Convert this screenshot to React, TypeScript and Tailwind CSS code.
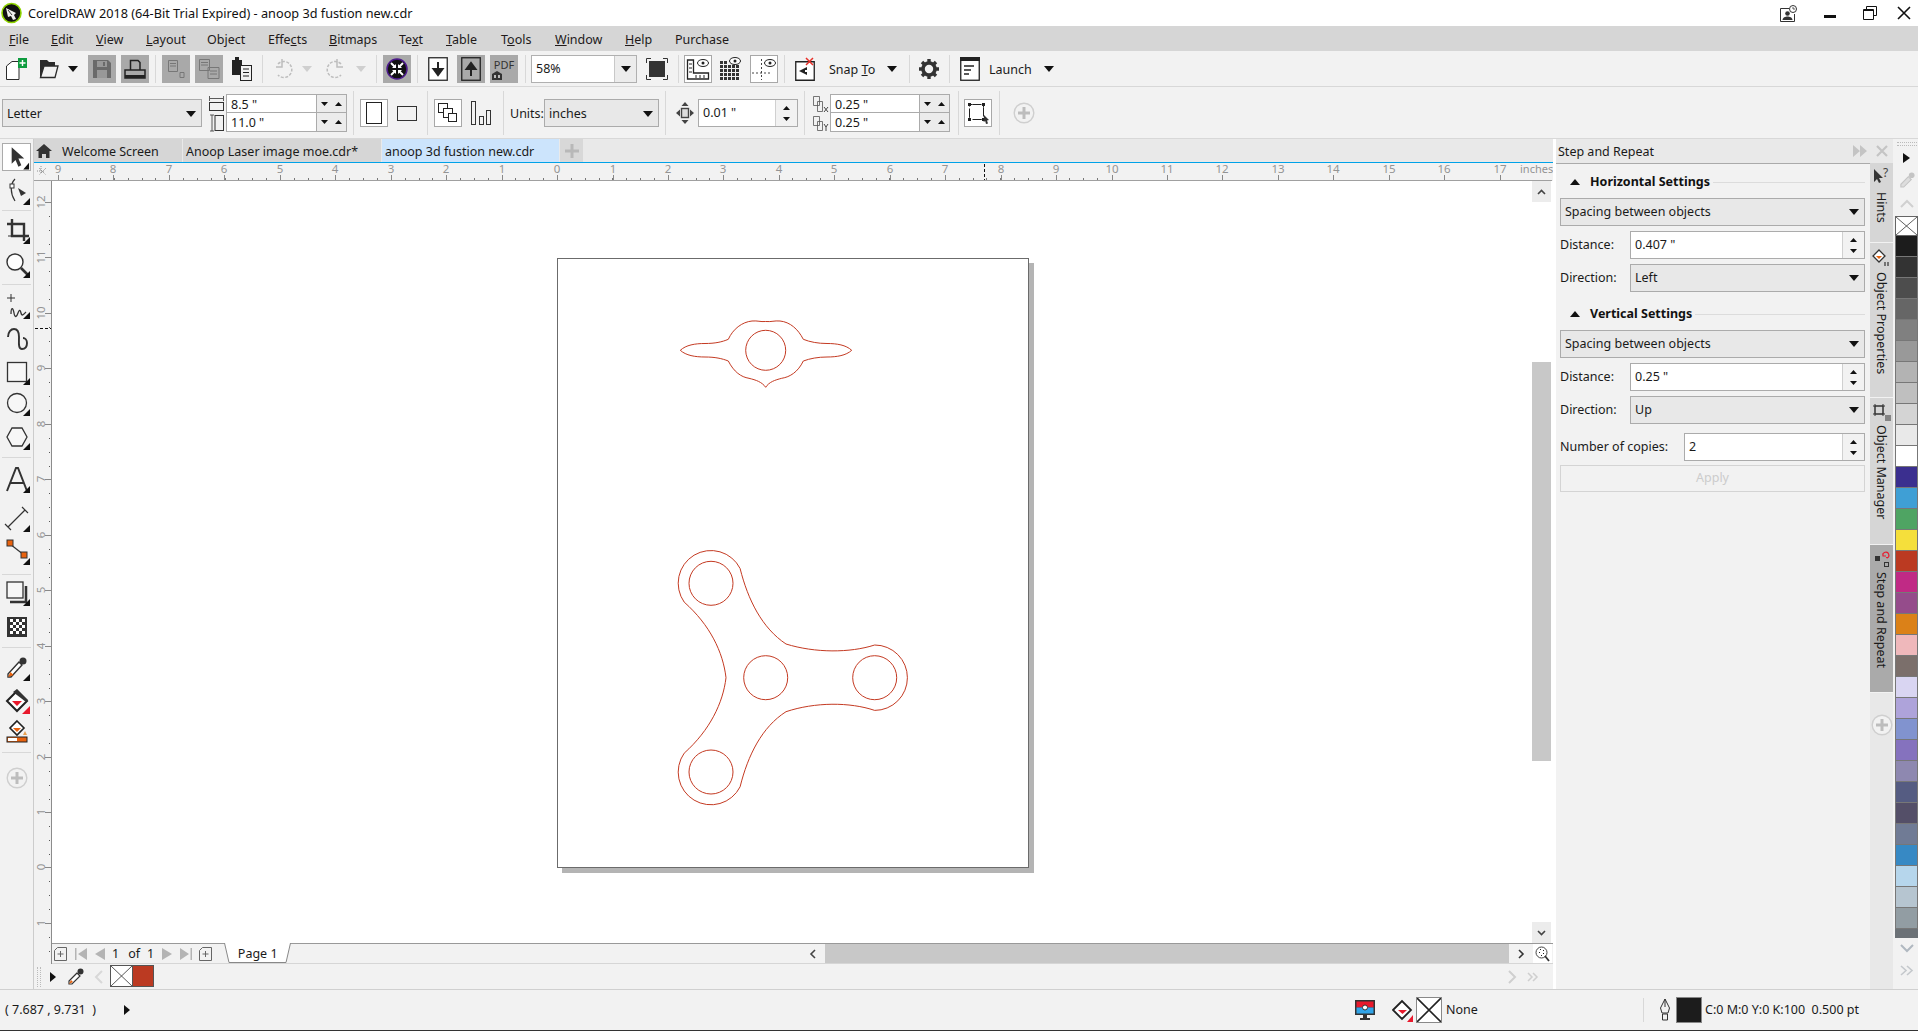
import type { ReactNode } from "react";

const ink = "#2b2b2b";

function Caret({ className = "", fill = "#111" }: { className?: string; fill?: string }) {
  return (
    <svg width="10" height="6" viewBox="0 0 10 6" className={className}>
      <path d="M0 0h10L5 6z" fill={fill} />
    </svg>
  );
}

function Sep({ className }: { className: string }) {
  return <div className={`w-px bg-[#d8d8d8] ${className}`} />;
}

function Box({ gray, className = "", children }: { gray?: boolean; className?: string; children: ReactNode }) {
  return (
    <div
      className={`flex h-[28px] w-[28px] shrink-0 items-center justify-center ${
        gray ? "bg-[#a9a9a9]" : "border border-[#a8a8a8] bg-white"
      } ${className}`}
    >
      {children}
    </div>
  );
}

function Combo({ className, label }: { className: string; label: string }) {
  return (
    <div className={`flex h-[28px] shrink-0 items-center justify-between border border-[#ababab] bg-[#e8e8e8] pl-[4px] pr-[5px] ${className}`}>
      <span>{label}</span>
      <Caret />
    </div>
  );
}

function Spin({ className, label }: { className: string; label: string }) {
  return (
    <div className={`flex h-[28px] shrink-0 items-stretch border border-[#ababab] bg-white ${className}`}>
      <span className="flex-1 self-center pl-[4px]">{label}</span>
      <div className="flex w-[22px] flex-col items-center justify-center gap-[7px] border-l border-[#d0d0d0] bg-[#f2f2f2]">
        <svg width="7" height="4"><path d="M0 4h7L3.5 0z" fill="#111" /></svg>
        <svg width="7" height="4"><path d="M0 0h7L3.5 4z" fill="#111" /></svg>
      </div>
    </div>
  );
}

function PairRow({ label, last }: { label: string; last?: boolean }) {
  return (
    <div className={`flex h-[18px] items-center bg-white ${last ? "" : "border-b border-[#ababab]"}`}>
      <span className="flex-1 pl-[4px] pt-[3px]">{label}</span>
      <div className="flex h-full w-[30px] items-center justify-center gap-[7px] border-l border-[#ababab] bg-[#ececec]">
        <svg width="7" height="4"><path d="M0 0h7L3.5 4z" fill="#111" /></svg>
        <svg width="7" height="4"><path d="M0 4h7L3.5 0z" fill="#111" /></svg>
      </div>
    </div>
  );
}

function PlusCircle({ className = "" }: { className?: string }) {
  return (
    <svg width="22" height="22" viewBox="0 0 22 22" className={className}>
      <circle cx="11" cy="11" r="9.8" fill="#f2f2f2" stroke="#cfcfcf" strokeWidth="1.4" />
      <path d="M11 5v12M5 11h12" stroke="#bdbdbd" strokeWidth="3" />
    </svg>
  );
}

function XCell({ className }: { className: string }) {
  return (
    <svg className={className} viewBox="0 0 20 20" preserveAspectRatio="none">
      <rect width="20" height="20" fill="#fff" />
      <path d="M0 0L20 20M20 0L0 20" stroke="#333" strokeWidth="0.8" />
    </svg>
  );
}

const menus = [
  { name: "File", w: "w-[42px]", pre: "", u: "F", post: "ile" },
  { name: "Edit", w: "w-[45px]", pre: "", u: "E", post: "dit" },
  { name: "View", w: "w-[50px]", pre: "", u: "V", post: "iew" },
  { name: "Layout", w: "w-[61px]", pre: "", u: "L", post: "ayout" },
  { name: "Object", w: "w-[61px]", pre: "Ob", u: "j", post: "ect" },
  { name: "Effects", w: "w-[61px]", pre: "Effe", u: "c", post: "ts" },
  { name: "Bitmaps", w: "w-[70px]", pre: "", u: "B", post: "itmaps" },
  { name: "Text", w: "w-[47px]", pre: "Te", u: "x", post: "t" },
  { name: "Table", w: "w-[55px]", pre: "", u: "T", post: "able" },
  { name: "Tools", w: "w-[54px]", pre: "T", u: "o", post: "ols" },
  { name: "Window", w: "w-[70px]", pre: "", u: "W", post: "indow" },
  { name: "Help", w: "w-[50px]", pre: "", u: "H", post: "elp" },
];

function TitleBar() {
  return (
    <div className="flex h-[26px] shrink-0 items-center bg-white">
      <svg width="22" height="22" viewBox="0 0 22 22" className="ml-[1px]">
        <circle cx="10.5" cy="11" r="9.5" fill="#111" stroke="#8fd400" strokeWidth="1.6" />
        <path d="M5 6l10 5-2 2 2 4-3 1-2-4-3 1z" fill="#eee" />
        <path d="M7 8l4 5" stroke="#111" strokeWidth="0.8" />
      </svg>
      <span className="ml-[5px] text-[12.7px] text-[#111]">CorelDRAW 2018 (64-Bit Trial Expired) - anoop 3d fustion new.cdr</span>
      <div className="ml-auto flex items-center">
        <svg width="17" height="17" viewBox="0 0 17 17">
          <path d="M9 3.500H.5v13h14V9" fill="none" stroke="#333" strokeWidth="1" />
          <circle cx="7.500" cy="8.500" r="2.300" fill="#333" />
          <path d="M2.500 15c0-2.500 3-3.500 5-3.500s5 1 5 3.500z" fill="#333" />
          <circle cx="13" cy="4" r="3.500" fill="#fff" stroke="#333" />
          <path d="M13 2v2h2" fill="none" stroke="#333" strokeWidth="0.800" />
        </svg>
        <div className="ml-[27px] mt-[6px] h-[3px] w-[12px] bg-[#111]" />
        <svg width="15" height="14" viewBox="0 0 15 14" className="ml-[27px]">
          <path d="M3.500 3.500V.5h10v9h-3M.5 3.500h10v10H.5z" fill="none" stroke="#111" />
          <path d="M.5 4.500h10" stroke="#111" />
        </svg>
        <svg width="14" height="14" viewBox="0 0 14 14" className="ml-[19px] mr-[7px]">
          <path d="M1 1l12 12M13 1L1 13" stroke="#111" strokeWidth="1.600" />
        </svg>
      </div>
    </div>
  );
}

function MenuBar() {
  return (
    <div className="flex h-[25px] shrink-0 items-center bg-[#d6d6d6] pl-[9px] pt-[4px] text-[#221a1a]">
      {menus.map((m) => (
        <div key={m.name} className={m.w}>
          {m.pre}
          <u>{m.u}</u>
          {m.post}
        </div>
      ))}
      <div>Purchase</div>
    </div>
  );
}

function ToolbarOne() {
  return (
    <div className="flex h-[36px] shrink-0 items-center border-b border-[#d8d8d8] bg-[#f2f2f2] pt-[1px]">
      <svg width="21" height="22" viewBox="0 0 21 22" className="ml-[6px]">
        <path d="M.5 8L6 3.500h7v18H.5z" fill="#fff" stroke={ink} />
        <rect x="12" y="0" width="9" height="10" fill="#0e9c3f" />
        <path d="M16.500 2v6M13.500 5h6" stroke="#fff" strokeWidth="1.400" />
      </svg>
      <svg width="20" height="20" viewBox="0 0 20 20" className="ml-[12px]">
        <path d="M1 1h7l2 2h6v4H5L2 18H1z" fill={ink} />
        <path d="M5 7h14l-3 11.500H1.500z" fill="#f2f2f2" stroke={ink} strokeWidth="1.300" />
      </svg>
      <Caret className="ml-[9px]" />
      <Box gray className="ml-[10px]">
        <svg width="18" height="18" viewBox="0 0 18 18">
          <path d="M0 0h15l3 3v15H0z" fill="#6a6a6a" />
          <rect x="4" y="1" width="10" height="6" fill="#989898" />
          <rect x="4" y="10" width="10" height="8" fill="#989898" />
          <rect x="10" y="2" width="2" height="4" fill="#6a6a6a" />
        </svg>
      </Box>
      <Box gray className="ml-[5px]">
        <svg width="22" height="20" viewBox="0 0 22 20">
          <path d="M6.500 11V1.500H14l2 2V11" fill="none" stroke="#222" strokeWidth="1.500" />
          <path d="M1 11h20v8H1z" fill="none" stroke="#222" strokeWidth="1.500" />
          <rect x="1" y="16" width="20" height="3" fill="#222" />
        </svg>
      </Box>
      <Sep className="ml-[6px] h-[28px]" />
      <Box gray className="ml-[6px]">
        <svg width="22" height="22" viewBox="0 0 22 22" fill="none" stroke="#777">
          <path d="M3.500 2.500h9v11h-9zM5 5.500h6M5 8h6M15 14.500h4v5h-4z" />
        </svg>
      </Box>
      <Box gray className="ml-[5px]">
        <svg width="24" height="22" viewBox="0 0 24 22" fill="none" stroke="#777">
          <path d="M2.500 1.500h10v11h-10zM4 4.500h7M4 7h7M11 9.500h11v11H11zM13 13h7M13 16h7" />
        </svg>
      </Box>
      <svg width="21" height="24" viewBox="0 0 21 24" className="ml-[8px]">
        <rect x="1" y="3" width="10" height="15" fill="#222" />
        <rect x="4" y="0" width="4" height="3" fill="#222" />
        <rect x="9.500" y="8.500" width="11" height="15" fill="#f2f2f2" stroke="#222" />
        <path d="M12 12h6M12 15.500h6M12 19h6" stroke="#222" />
      </svg>
      <Sep className="ml-[10px] h-[28px]" />
      <svg width="20" height="24" viewBox="0 0 20 24" className="ml-[10px]" fill="none" stroke="#bdbdbd" strokeWidth="1.500">
        <path d="M5 7a8 8 0 1 1 0 11" strokeDasharray="3 1.500" />
        <path d="M9 2v8H3" />
      </svg>
      <Caret className="ml-[9px]" fill="#cfcfcf" />
      <svg width="20" height="24" viewBox="0 0 20 24" className="ml-[14px]" fill="none" stroke="#bdbdbd" strokeWidth="1.500">
        <path d="M15 7a8 8 0 1 0 0 11" strokeDasharray="3 1.500" />
        <path d="M11 2v8h6" />
      </svg>
      <Caret className="ml-[10px]" fill="#cfcfcf" />
      <Sep className="ml-[10px] h-[28px]" />
      <Box gray className="ml-[6px]">
        <svg width="22" height="22" viewBox="0 0 22 22">
          <circle cx="11" cy="11" r="10" fill="#111" stroke="#4d1a8c" strokeWidth="1.500" />
          <path d="M5 5l3.500 3.500M17 5l-3.500 3.500M5 17l3.500-3.500M17 17l-3.500-3.500" stroke="#fff" strokeWidth="2" />
          <path d="M10 10V6L6 10zM12 10V6l4 4zM10 12v4l-4-4zM12 12v4l4-4z" fill="#fff" />
        </svg>
      </Box>
      <Sep className="ml-[6px] h-[28px]" />
      <svg width="20" height="24" viewBox="0 0 20 24" className="ml-[10px]">
        <rect x=".75" y=".75" width="18.500" height="22.500" fill="#fff" stroke={ink} strokeWidth="1.300" />
        <path d="M10 5v12M5.500 12l4.500 6 4.500-6z" stroke="#222" strokeWidth="2" fill="#222" />
      </svg>
      <Box gray className="ml-[9px]">
        <svg width="20" height="24" viewBox="0 0 20 24">
          <rect x=".75" y=".75" width="18.500" height="22.500" fill="none" stroke="#222" strokeWidth="1.300" />
          <path d="M10 19V7M5.500 12L10 6l4.500 6z" stroke="#222" strokeWidth="2" fill="#222" />
        </svg>
      </Box>
      <Box gray className="ml-[5px]">
        <div className="flex flex-col items-center leading-none">
          <span className="text-[11px] text-[#333]">PDF</span>
          <svg width="10" height="9" viewBox="0 0 10 9" className="-ml-[14px] mt-[1px]">
            <path d="M0 3l5-3 5 3v6H0z" fill="#333" />
            <path d="M2 4h2v3H2zM6 4h2v3H6z" fill="#bbb" />
          </svg>
        </div>
      </Box>
      <Sep className="ml-[7px] h-[28px]" />
      <div className="ml-[5px] flex h-[28px] w-[106px] shrink-0 items-stretch border border-[#b0b0b0] bg-white">
        <span className="flex-1 self-center pl-[4px] pt-[1px]">58%</span>
        <div className="flex w-[22px] items-center justify-center border-l border-[#c8c8c8] bg-[#ececec]">
          <Caret />
        </div>
      </div>
      <svg width="22" height="22" viewBox="0 0 22 22" className="ml-[9px]">
        <rect x="3" y="3" width="16" height="16" fill="#333" />
        <path d="M.5 5V.5H5M17 .5h4.500V5M21.500 17v4.500H17M5 21.500H.5V17" fill="none" stroke="#333" />
      </svg>
      <Sep className="ml-[10px] h-[28px]" />
      <Box className="ml-[5px]">
        <svg width="24" height="24" viewBox="0 0 24 24">
          <path d="M1.500 3v19h21v-6H7.500V3z" fill="#fff" stroke="#222" strokeWidth="1.300" />
          <path d="M3 7h3M3 11h3M3 15h3M10 18v3M14 18v3M18 18v3" stroke="#222" />
          <ellipse cx="17" cy="6" rx="5.500" ry="3.500" fill="none" stroke="#222" />
          <circle cx="17" cy="6" r="1.500" fill="#222" />
        </svg>
      </Box>
      <svg width="21" height="24" viewBox="0 0 21 24" className="ml-[8px]">
        <path d="M0 4h3v3H0zM4 4h3v3H4zM0 8h3v3H0zM4 8h3v3H4zM8 8h3v3H8zM12 8h3v3h-3zM16 8h3v3h-3zM0 12h3v3H0zM4 12h3v3H4zM8 12h3v3H8zM12 12h3v3h-3zM16 12h3v3h-3zM0 16h3v3H0zM4 16h3v3H4zM8 16h3v3H8zM12 16h3v3h-3zM16 16h3v3h-3zM0 20h3v3H0zM4 20h3v3H4zM8 20h3v3H8zM12 20h3v3h-3zM16 20h3v3h-3z" fill="#333" />
        <ellipse cx="15" cy="4" rx="5.500" ry="3.500" fill="#fff" stroke="#222" />
        <circle cx="15" cy="4" r="1.500" fill="#222" />
      </svg>
      <Box className="ml-[9px]">
        <svg width="24" height="24" viewBox="0 0 24 24">
          <path d="M9.500 2v21M0 16h20" stroke="#444" strokeDasharray="2 2" />
          <ellipse cx="18" cy="6" rx="5.500" ry="3.500" fill="none" stroke="#222" />
          <circle cx="18" cy="6" r="1.500" fill="#222" />
        </svg>
      </Box>
      <Sep className="ml-[6px] h-[28px]" />
      <svg width="20" height="24" viewBox="0 0 20 24" className="ml-[10px]">
        <path d="M.75 4.750h18.500v18.500H.75z" fill="#fff" stroke="#222" strokeWidth="1.300" />
        <path d="M4 14l8-4v8z" fill="#222" />
        <path d="M10 14h6" stroke="#fff" strokeWidth="2" />
        <path d="M11 1l7 7M18 1l-7 7" stroke="#e8312a" strokeWidth="1.500" />
      </svg>
      <span className="ml-[14px] w-[47px] shrink-0 whitespace-nowrap pt-[2px]">
        Snap <u>T</u>o
      </span>
      <Caret className="ml-[11px]" />
      <Sep className="ml-[12px] h-[28px]" />
      <svg width="20" height="20" viewBox="0 0 20 20" className="ml-[9px]">
        <circle cx="10" cy="10" r="6" fill="none" stroke="#333" strokeWidth="3.600" />
        <path d="M10 0v4M10 16v4M0 10h4M16 10h4M3 3l3 3M14 14l3 3M17 3l-3 3M6 14l-3 3" stroke="#333" strokeWidth="3.400" />
      </svg>
      <Sep className="ml-[10px] h-[28px]" />
      <svg width="20" height="24" viewBox="0 0 20 24" className="ml-[10px]">
        <rect x=".75" y=".75" width="18.500" height="22.500" fill="#fff" stroke="#222" strokeWidth="1.300" />
        <rect x="0" y="0" width="20" height="4" fill="#222" />
        <path d="M4 9h10M4 13h7M4 17h5" stroke="#222" strokeWidth="1.300" />
      </svg>
      <span className="ml-[9px] w-[40px] shrink-0 pt-[2px]">Launch</span>
      <Caret className="ml-[15px]" />
    </div>
  );
}

function ToolbarTwo() {
  return (
    <div className="flex h-[52px] shrink-0 items-center border-b border-[#d8d8d8] bg-[#f2f2f2] pt-[1px]">
      <Combo className="ml-[2px] w-[200px] pt-[2px]" label="Letter" />
      <svg width="15" height="37" viewBox="0 0 15 37" className="ml-[7px]" fill="none" stroke="#333">
        <path d="M.5 1v5M14.500 1v5M1 3.500h13" strokeWidth="0.800" />
        <rect x=".5" y="7.500" width="14" height="8" />
        <path d="M1 20h4M1 36h4M3 20v16" strokeWidth="0.800" />
        <rect x="6" y="20.500" width="8.500" height="15" />
      </svg>
      <div className="ml-[2px] w-[121px] shrink-0 border border-[#ababab]">
        <PairRow label={'8.5 "'} />
        <PairRow label={'11.0 "'} last />
      </div>
      <Sep className="ml-[6px] h-[44px]" />
      <Box className="ml-[6px]">
        <div className="h-[22px] w-[16px] border border-[#222]" />
      </Box>
      <div className="ml-[9px] h-[15px] w-[20px] border border-[#333] bg-[#f2f2f2]" />
      <Sep className="ml-[10px] h-[44px]" />
      <Box className="ml-[6px]">
        <svg width="20" height="20" viewBox="0 0 20 20" fill="#fff" stroke="#222">
          <rect x=".5" y=".5" width="9" height="9" />
          <rect x="5.500" y="5.500" width="9" height="9" />
          <rect x="10.500" y="10.500" width="8" height="8" />
        </svg>
      </Box>
      <svg width="20" height="24" viewBox="0 0 20 24" className="ml-[9px]" fill="none" stroke="#333">
        <rect x=".5" y=".5" width="4" height="23" />
        <rect x="8.500" y="15.500" width="4" height="8" />
        <rect x="15.500" y="9.500" width="4" height="14" />
      </svg>
      <Sep className="ml-[12px] h-[44px]" />
      <span className="ml-[6px] w-[32px] shrink-0 whitespace-nowrap pt-[2px]">Units:</span>
      <Combo className="ml-[2px] w-[115px] pt-[2px]" label="inches" />
      <Sep className="ml-[6px] h-[44px]" />
      <svg width="18" height="22" viewBox="0 0 18 22" className="ml-[10px]">
        <path d="M9 0l3.500 4h-7zM9 22l3.500-4h-7zM0 11l4-3.500v7zM18 11l-4-3.500v7z" fill="#444" />
        <rect x="5.500" y="6.500" width="7" height="9" fill="#ddd" stroke="#444" strokeWidth="1.400" />
      </svg>
      <div className="ml-[4px] flex h-[28px] w-[100px] shrink-0 items-stretch border border-[#ababab] bg-white">
        <span className="flex-1 self-center pl-[4px] pt-[1px]">0.01 "</span>
        <div className="flex w-[22px] flex-col items-center justify-center gap-[7px] border-l border-[#d0d0d0] bg-[#f2f2f2]">
          <svg width="7" height="4"><path d="M0 4h7L3.500 0z" fill="#111" /></svg>
          <svg width="7" height="4"><path d="M0 0h7L3.500 4z" fill="#111" /></svg>
        </div>
      </div>
      <Sep className="ml-[6px] h-[44px]" />
      <svg width="16" height="37" viewBox="0 0 16 37" className="ml-[8px]" fill="none" stroke="#555">
        <path d="M.5 1.500h6v9h-6zM4.500 6.500h5v10h-5zM.5 21.500h6v9h-6zM4.500 26.500h5v9h-5z" strokeWidth="0.800" />
        <path d="M11 12l4 5M15 12l-4 5M11 29l2 3 2-3M13 32v4" strokeWidth="0.900" stroke="#333" />
      </svg>
      <div className="ml-[1px] w-[120px] shrink-0 border border-[#ababab]">
        <PairRow label={'0.25 "'} />
        <PairRow label={'0.25 "'} last />
      </div>
      <Sep className="ml-[8px] h-[44px]" />
      <Box className="ml-[5px]">
        <svg width="24" height="24" viewBox="0 0 24 24">
          <path d="M3.500 3.500h14v15h-14z" fill="none" stroke="#222" strokeDasharray="3 0 9 2" />
          <path d="M2 2h3v3H2zM16 2h3v3h-3zM2 17h3v3H2zM16 17h3v3h-3z" fill="#222" />
          <path d="M18 14l5 5-2 .5 1 3-2 .5-.8-3-1.500 1z" fill="#333" />
        </svg>
      </Box>
      <Sep className="ml-[7px] h-[44px]" />
      <PlusCircle className="ml-[13px]" />
    </div>
  );
}

const Corner = () => <path d="M29 22v7h-7z" fill="#111" />;

function ToolIcon({ children, corner = true }: { children: ReactNode; corner?: boolean }) {
  return (
    <svg width="32" height="32" viewBox="0 0 32 32" className="-my-px">
      {children}
      {corner && <Corner />}
    </svg>
  );
}

function Slot({ className = "", children }: { className?: string; children: ReactNode }) {
  return <div className={`flex h-[30px] shrink-0 items-center justify-center ${className}`}>{children}</div>;
}

function ToolSep({ className }: { className: string }) {
  return <div className={`mx-[2px] h-px shrink-0 bg-[#d8d8d8] ${className}`} />;
}

function Toolbox() {
  return (
    <div className="flex w-[34px] shrink-0 flex-col border-r border-[#cccccc] bg-[#f2f2f2] pt-[4px]">
      <div className="relative mx-[2px] flex h-[28px] shrink-0 items-center justify-center border border-[#ababab] bg-white">
        <svg width="28" height="26" viewBox="0 0 28 26">
          <path d="M9 3l0 17 4-4 3 7 3-1.500-3-7h6z" fill="#333" />
          <path d="M27 19v7h-6z" fill="#111" />
        </svg>
      </div>
      <Slot className="mt-[6px]">
        <ToolIcon>
          <path d="M14 3C9 8 9 17 14 25" fill="none" stroke="#333" strokeWidth="1.200" />
          <rect x="9" y="8" width="4" height="4" fill="#fff" stroke="#333" />
          <path d="M17 12l8 5-5 3z" fill="#333" />
        </ToolIcon>
      </Slot>
      <ToolSep className="mt-[3px]" />
      <Slot className="mt-[5px]">
        <ToolIcon>
          <path d="M11 4v17h17M6 9h17v17" fill="none" stroke="#333" strokeWidth="2.400" />
          <path d="M7 21h5M22 9h-4" stroke="#333" />
        </ToolIcon>
      </Slot>
      <Slot className="mt-[4px]">
        <ToolIcon>
          <circle cx="14" cy="13" r="8" fill="#fff" stroke="#333" strokeWidth="1.400" />
          <path d="M20 19l7 7" stroke="#333" strokeWidth="2.600" />
        </ToolIcon>
      </Slot>
      <ToolSep className="mt-[4px]" />
      <Slot className="mt-[6px]">
        <ToolIcon>
          <path d="M6 8h8M10 4v8" stroke="#333" />
          <path d="M10 24c0-7 2-7 3-1s3 3 4 0 2-4 3 0 3 1 5-1" fill="none" stroke="#333" strokeWidth="1.300" />
        </ToolIcon>
      </Slot>
      <Slot className="mt-[4px]">
        <ToolIcon corner={false}>
          <path d="M7 13c0-5 3-8 6-8s5 3 5 8-1 12 3 12 5-3 5-6-2-5-4-5" fill="none" stroke="#333" strokeWidth="1.900" />
        </ToolIcon>
      </Slot>
      <Slot className="mt-[2px]">
        <ToolIcon>
          <rect x="6.500" y="6.500" width="19" height="19" fill="#f7f7f7" stroke="#333" strokeWidth="1.300" />
        </ToolIcon>
      </Slot>
      <Slot className="mt-[1px]">
        <ToolIcon>
          <circle cx="16" cy="16" r="9.500" fill="#f7f7f7" stroke="#333" strokeWidth="1.300" />
        </ToolIcon>
      </Slot>
      <Slot className="mt-[4px]">
        <ToolIcon>
          <path d="M11 7h10l5 9-5 9H11L6 16z" fill="#f7f7f7" stroke="#333" strokeWidth="1.300" />
        </ToolIcon>
      </Slot>
      <ToolSep className="mt-[5px]" />
      <Slot className="mt-[7px]">
        <ToolIcon>
          <path d="M6 27L15 4h2l9 23M9.500 19h13" fill="none" stroke="#333" strokeWidth="2" />
        </ToolIcon>
      </Slot>
      <Slot className="mt-[9px]">
        <ToolIcon>
          <path d="M7 24L24 7M4 21l6 6M21 4l6 6" stroke="#333" strokeWidth="1.200" />
        </ToolIcon>
      </Slot>
      <Slot className="mt-[3px]">
        <ToolIcon>
          <path d="M9 8l14 11" stroke="#333" strokeWidth="1.200" />
          <rect x="6" y="4" width="6" height="6" fill="#e8620e" stroke="#333" />
          <rect x="20" y="16" width="6" height="6" fill="#e8620e" stroke="#333" />
        </ToolIcon>
      </Slot>
      <ToolSep className="mt-[7px]" />
      <Slot className="mt-[3px]">
        <ToolIcon>
          <path d="M9 25h16V9" fill="none" stroke="#333" strokeWidth="2.500" />
          <rect x="6" y="5" width="16" height="16" fill="#f7f7f7" stroke="#333" strokeWidth="1.300" />
        </ToolIcon>
      </Slot>
      <Slot className="mt-[4px]">
        <ToolIcon corner={false}>
          <rect x="6" y="6" width="20" height="20" fill="#333" />
          <path d="M9 8h3v3H9zM15 8h3v3h-3zM21 8h3v3h-3zM12 11h3v3h-3zM18 11h3v3h-3zM9 14h3v3H9zM15 14h3v3h-3zM21 14h3v3h-3zM12 17h3v3h-3zM18 17h3v3h-3zM9 20h3v3H9zM15 20h3v3h-3zM21 20h3v3h-3z" fill="#fff" />
        </ToolIcon>
      </Slot>
      <ToolSep className="mt-[5px]" />
      <Slot className="mt-[5px]">
        <ToolIcon>
          <path d="M18 10L7 22v3h3l11-12z" fill="#fff" stroke="#333" strokeWidth="1.400" />
          <path d="M7 25l2.500-5 3 3z" fill="#e8620e" />
          <circle cx="22" cy="9" r="3.500" fill="#333" />
        </ToolIcon>
      </Slot>
      <Slot className="mt-[3px]">
        <svg width="32" height="32" viewBox="0 0 32 32">
          <path d="M6 16l10-10 10 10-10 10z" fill="#fff" stroke="#222" strokeWidth="2" />
          <path d="M11 16h10l-5 5z" fill="#e8192c" />
          <path d="M12 7l4-3 11 11-2 2z" fill="#333" />
          <path d="M29 21v8h-8z" fill="#e8192c" />
        </svg>
      </Slot>
      <Slot className="mt-[3px]">
        <svg width="32" height="32" viewBox="0 0 32 32">
          <path d="M16 3l7 7-7 7-7-7z" fill="#fff" stroke="#222" strokeWidth="1.600" />
          <path d="M12 10h8l-4 4z" fill="#e8620e" />
          <rect x="6" y="19" width="20" height="5" fill="#e8620e" stroke="#222" />
          <rect x="7" y="20" width="9" height="3" fill="#fff" />
          <path d="M24 13l2 4h-4z" fill="#e8a050" />
        </svg>
      </Slot>
      <ToolSep className="mt-[3px]" />
      <Slot className="mt-[10px]">
        <PlusCircle />
      </Slot>
    </div>
  );
}

function Tabs() {
  return (
    <div className="flex h-[24px] shrink-0 items-stretch border-b border-[#00a2e8] bg-[#e9e9e9]">
      <div className="flex w-[148px] items-center bg-[#d6d6d6]">
        <svg width="16" height="16" viewBox="0 0 16 16" className="ml-[2px]">
          <path d="M8 1L0 8h2.500v7H6v-4h4v4h3.500V8H16z" fill="#333" />
        </svg>
        <span className="ml-[10px] mt-[3px]">Welcome Screen</span>
      </div>
      <div className="ml-px flex w-[198px] items-center bg-[#d6d6d6] pl-[3px] pt-[3px]">Anoop Laser image moe.cdr*</div>
      <div className="ml-px flex w-[177px] items-center bg-[#cce4fc] pl-[3px] pt-[3px]">anoop 3d fustion new.cdr</div>
      <div className="ml-px flex w-[23px] items-center justify-center bg-[#d8d8d8]">
        <svg width="14" height="14" viewBox="0 0 14 14">
          <path d="M7 0v14M0 7h14" stroke="#b8b8b8" strokeWidth="3" />
        </svg>
      </div>
    </div>
  );
}

const hTicks = Array.from({ length: 76 }, (_, i) => 557 + (i - 36) * 13.85);
const hLabels = [9, 8, 7, 6, 5, 4, 3, 2, 1, 0, 1, 2, 3, 4, 5, 6, 7, 8, 9, 10, 11, 12, 13, 14, 15, 16, 17];
const vLabels = [12, 11, 10, 9, 8, 7, 6, 5, 4, 3, 2, 1, 0, 1];

function TopRuler() {
  return (
    <div className="h-[18px] shrink-0 bg-[#f2f2f2]">
      <svg width="1519" height="18" viewBox="34 163 1519 18" className="block overflow-visible" fontSize="11.5" fill="#949494">
        <path d="M34 180.500H1552" stroke="#a0a0a0" />
        <path d="M39 168l7 7M46 168l-7 7M41 166v8M37 171h8" stroke="#777" strokeWidth="0.800" strokeDasharray="1 1" />
        {hTicks.map((x) => (
          <path key={x} d={`M${Math.round(x)}.5 178v2`} stroke="#777" />
        ))}
        {hLabels.map((n, i) => {
          const x = Math.round(58 + i * 55.45);
          return (
            <g key={i}>
              <path d={`M${x}.5 175v5`} stroke="#888" />
              <text x={x} y="173" textAnchor="middle">{n}</text>
            </g>
          );
        })}
        <text x="1520" y="173" fontSize="11">inches</text>
        <path d="M984.500 164v16" stroke="#111" strokeDasharray="3 2" />
      </svg>
    </div>
  );
}

function LeftRuler() {
  return (
    <div className="w-[18px] shrink-0 bg-[#f2f2f2]">
      <svg width="18" height="783" viewBox="34 181 18 783" className="block overflow-visible" fontSize="11.5" fill="#949494">
        <path d="M51.500 181V964" stroke="#8c8c8c" />
        {vLabels.map((n, i) => {
          const y = Math.round(202 + i * 55.45);
          return (
            <g key={i}>
              <path d={`M45 ${y}.5h6`} stroke="#888" />
              <path d={`M49 ${y + 14}.5h1M49 ${y + 28}.5h1M49 ${y + 42}.5h1`} stroke="#555" />
              <text x="45" y={y} transform={`rotate(-90 45 ${y})`} textAnchor="middle">{n}</text>
            </g>
          );
        })}
        <path d="M35 328.500H51" stroke="#111" strokeDasharray="3 2" />
      </svg>
    </div>
  );
}

function Drawing() {
  return (
    <svg width="472" height="610" viewBox="557 258 472 610" className="absolute left-[-1px] top-[-1px]" fill="none" stroke="#c43a22" strokeWidth="1">
      <circle cx="765.700" cy="350.300" r="20" />
      <path d="M680.300 350.300C686 345 695 343.500 705 343.500C715 343.500 722 342 728.300 339.300C733 329 742 322 752 321C758 320.500 760 322 765.700 321.500C772 322 774 320.500 780 321C790 322 798 329 803.300 339.300C810 342 818 343.500 827 343.500C837 343.500 846 345 851.700 350.300C846 355.500 837 357 827 357C818 357 810 358.500 803.300 361C798 372 790 377 781.700 378.300C775 380 769 382 765.700 387.300C762 382 756 380 749 378.300C741 377 734 372 728.300 361C722 358.500 715 357 705 357C695 357 686 355.500 680.300 350.300Z" />
      <circle cx="765.700" cy="677.700" r="22" />
      <circle cx="874.700" cy="677.700" r="22" />
      <circle cx="711" cy="583.300" r="22" />
      <circle cx="711" cy="772" r="22" />
      <path d="M740.100 568.500A32.700 32.700 0 1 0 684.200 602.100C710 625 723 652 726 677.700C723 703 710 730 684.200 753.200A32.700 32.700 0 1 0 740.100 786.800C748 755 762 727 786 711.700C815 702 850 702 874.700 710.400A32.700 32.700 0 1 0 874.700 645C850 653 815 653 786 644C762 628 748 600 740.100 568.500Z" />
    </svg>
  );
}

function Canvas() {
  return (
    <div className="flex min-h-0 flex-1">
      <div className="relative flex-1 overflow-hidden bg-white">
        <div className="absolute left-[505px] top-[77px] h-[610px] w-[472px] border border-[#6b6b6b] bg-white shadow-[5px_5px_0_#b4b4b4]">
          <Drawing />
        </div>
      </div>
      <div className="flex w-[21px] shrink-0 flex-col bg-white">
        <div className="flex h-[21px] w-[19px] items-center justify-center bg-[#ececec]">
          <svg width="9" height="6"><path d="M1 5l3.500-3.500L8 5" fill="none" stroke="#444" strokeWidth="1.600" /></svg>
        </div>
        <div className="mt-[160px] h-[399px] w-[19px] bg-[#c8c8c8]" />
        <div className="mt-auto flex h-[21px] w-[19px] items-center justify-center bg-[#ececec]">
          <svg width="9" height="6"><path d="M1 1l3.500 3.500L8 1" fill="none" stroke="#444" strokeWidth="1.600" /></svg>
        </div>
      </div>
    </div>
  );
}

const AddPage = () => (
  <svg width="13" height="14" viewBox="0 0 13 14" fill="none" stroke="#666">
    <path d="M.5 3.500l3-3h9v13H.5zM6.500 4v6M3.500 7h6" />
  </svg>
);

function PageBar() {
  return (
    <div className="flex h-[21px] shrink-0 items-stretch border-y border-[#999999] border-b-[#d6d6d6] bg-[#f2f2f2] pr-px">
      <div className="flex items-center pl-[2px]">
        <AddPage />
        <svg width="12" height="12" viewBox="0 0 12 12" className="ml-[8px]"><path d="M0 0h1.500v12H0zM12 0v12L3 6z" fill="#b4b4b4" /></svg>
        <svg width="10" height="12" viewBox="0 0 10 12" className="ml-[8px]"><path d="M10 0v12L0 6z" fill="#b4b4b4" /></svg>
        <span className="ml-[7px] pt-[2px]">1</span>
        <span className="ml-[9px] pt-[2px]">of</span>
        <span className="ml-[7px] pt-[2px]">1</span>
        <svg width="10" height="12" viewBox="0 0 10 12" className="ml-[8px]"><path d="M0 0v12l10-6z" fill="#b4b4b4" /></svg>
        <svg width="12" height="12" viewBox="0 0 12 12" className="ml-[8px]"><path d="M12 0h-1.500v12H12zM0 0v12l9-6z" fill="#b4b4b4" /></svg>
        <div className="ml-[7px] flex"><AddPage /></div>
      </div>
      <div className="relative ml-[12px] -mt-px flex h-[20px] w-[67px] shrink-0 items-center justify-center pt-[2px]">
        <svg width="67" height="20" viewBox="0 0 67 20" className="absolute left-0 top-0">
          <path d="M.5 0L5 19.500H62L66.500 0" fill="#ffffff" stroke="#888888" />
        </svg>
        <span className="relative">Page 1</span>
      </div>
      <div className="flex-1" />
      <div className="flex w-[25px] items-center justify-center">
        <svg width="7" height="10"><path d="M6 1L2 5l4 4" fill="none" stroke="#444" strokeWidth="1.600" /></svg>
      </div>
      <div className="h-full w-[684px] bg-[#c8c8c8]" />
      <div className="flex w-[24px] items-center justify-center">
        <svg width="7" height="10"><path d="M1 1l4 4-4 4" fill="none" stroke="#333" strokeWidth="1.600" /></svg>
      </div>
      <div className="flex w-[19px] items-center justify-center bg-white">
        <svg width="15" height="16" viewBox="0 0 15 16">
          <circle cx="6.500" cy="6.500" r="5.500" fill="#fff" stroke="#444" />
          <path d="M5 3h1v1H5zM8 4h1v1H8zM4 6h1v1H4zM8 7h1v1H8zM6 9h1v1H6z" fill="#222" />
          <path d="M10 10l4 5" stroke="#333" strokeWidth="1.800" />
        </svg>
      </div>
    </div>
  );
}

function ColorBar() {
  return (
    <div className="flex h-[25px] shrink-0 items-center bg-[#f2f2f2]">
      <div className="ml-[3px] h-[20px] w-[4px] border-x border-dotted border-[#bbbbbb]" />
      <svg width="6" height="10" viewBox="0 0 6 10" className="ml-[9px]"><path d="M0 0l6 5-6 5z" fill="#111" /></svg>
      <svg width="17" height="17" viewBox="0 0 17 17" className="ml-[11px]">
        <path d="M10 5L2 13v3h3l8-8z" fill="#fff" stroke="#333" strokeWidth="1.200" />
        <path d="M2 16l2-4 2 2z" fill="#e8620e" />
        <circle cx="13.500" cy="3.500" r="3" fill="#333" />
      </svg>
      <svg width="10" height="14" viewBox="0 0 10 14" className="ml-[10px]"><path d="M8 1L2 7l6 6" fill="none" stroke="#d8d8d8" strokeWidth="2" /></svg>
      <div className="-mt-[2px] ml-[6px] flex h-[22px] w-[44px] border border-[#555]">
        <XCell className="h-full w-[21px]" />
        <div className="h-full flex-1 border-l border-[#555] bg-[#bb3a22]" />
      </div>
      <svg width="10" height="14" viewBox="0 0 10 14" className="ml-auto"><path d="M2 1l6 6-6 6" fill="none" stroke="#cfcfcf" strokeWidth="2" /></svg>
      <svg width="12" height="10" viewBox="0 0 12 10" className="ml-[10px] mr-[14px]"><path d="M1 1l4 4-4 4M6 1l4 4-4 4" fill="none" stroke="#cfcfcf" strokeWidth="1.500" /></svg>
    </div>
  );
}

function SectionHead({ label }: { label: string }) {
  return (
    <div className="flex h-[20px] items-center pl-[10px]">
      <svg width="10" height="6"><path d="M0 6h10L5 0z" fill="#111" /></svg>
      <span className="ml-[10px] whitespace-nowrap font-bold text-[#111]">{label}</span>
      <div className="ml-[3px] h-px flex-1 bg-[#dcdcdc]" />
    </div>
  );
}

function FieldRow({ label, children, className = "" }: { label: string; children: ReactNode; className?: string }) {
  return (
    <div className={`flex items-center justify-between ${className}`}>
      <span className="whitespace-nowrap">{label}</span>
      {children}
    </div>
  );
}

function StepAndRepeat() {
  return (
    <div className="flex w-[314px] shrink-0 flex-col border-t border-[#aaaaaa] bg-[#f2f2f2] pl-[4px] pr-[5px] pt-[8px]">
      <SectionHead label="Horizontal Settings" />
      <Combo className="mt-[6px] w-full" label="Spacing between objects" />
      <FieldRow label="Distance:" className="mt-[5px]"><Spin className="w-[235px]" label={'0.407 "'} /></FieldRow>
      <FieldRow label="Direction:" className="mt-[5px]"><Combo className="w-[235px]" label="Left" /></FieldRow>
      <div className="mt-[12px]"><SectionHead label="Vertical Settings" /></div>
      <Combo className="mt-[6px] w-full" label="Spacing between objects" />
      <FieldRow label="Distance:" className="mt-[5px]"><Spin className="w-[235px]" label={'0.25 "'} /></FieldRow>
      <FieldRow label="Direction:" className="mt-[5px]"><Combo className="w-[235px]" label="Up" /></FieldRow>
      <FieldRow label="Number of copies:" className="mt-[9px]"><Spin className="w-[181px]" label="2" /></FieldRow>
      <div className="mt-[4px] flex h-[27px] items-center justify-center border border-[#d4d4d4] text-[#cccccc]">Apply</div>
    </div>
  );
}

function VTab({ className, label, textClass, children }: { className: string; label: string; textClass: string; children: ReactNode }) {
  return (
    <div className={`flex shrink-0 flex-col items-center border-b border-[#f2f2f2] ${className}`}>
      {children}
      <span className={`-ml-[2px] whitespace-nowrap [writing-mode:vertical-rl] ${textClass}`}>{label}</span>
    </div>
  );
}

function DockerTabs() {
  return (
    <div className="flex w-[23px] shrink-0 flex-col bg-[#e8e8e8]">
      <VTab className="h-[80px] bg-[#d6d6d6]" label="Hints" textClass="mt-[6px]">
        <svg width="20" height="20" viewBox="0 0 20 20" className="mt-[3px] overflow-visible">
          <path d="M2 3v13l3-3 2 4 2-1-2-4h4z" fill="#333" />
          <text x="11" y="11" fontSize="12" fill="#444">?</text>
        </svg>
      </VTab>
      <VTab className="h-[155px] bg-[#d6d6d6]" label="Object Properties" textClass="mt-[4px]">
        <svg width="20" height="20" viewBox="0 0 20 20" className="mt-[5px]">
          <path d="M7 2l6 6-6 6-6-6z" fill="#fff" stroke="#333" strokeWidth="1.300" />
          <path d="M4 8h6l-3 3z" fill="#e8620e" />
          <path d="M13 14v4M16 14v4" stroke="#333" strokeWidth="1.200" />
        </svg>
      </VTab>
      <VTab className="h-[147px] bg-[#d6d6d6]" label="Object Manager" textClass="mt-[3px]">
        <svg width="20" height="20" viewBox="0 0 20 20" className="mt-[4px]">
          <path d="M3 4h8v8H3zM1 4h12M1 12h12M3 2v12M11 2v12" fill="none" stroke="#333" />
          <path d="M13 14h6M13 16h6M13 18h6" stroke="#333" />
        </svg>
      </VTab>
      <VTab className="h-[148px] bg-[#aaaaaa]" label="Step and Repeat" textClass="mt-[2px]">
        <svg width="20" height="20" viewBox="0 0 20 20" className="mt-[5px]">
          <rect x="3" y="6" width="5" height="5" fill="#333" />
          <rect x="12.500" y="12.500" width="4" height="4" fill="none" stroke="#333" />
          <path d="M11 6a3 3 0 1 1 4 2M16 8l-2-.5M11 3v3h3" fill="none" stroke="#e8192c" strokeWidth="1.100" />
        </svg>
      </VTab>
      <PlusCircle className="ml-px mt-[21px]" />
    </div>
  );
}

const swatches = [
  "bg-[#1c1c1c]", "bg-[#333333]", "bg-[#4d4d4d]", "bg-[#666666]", "bg-[#808080]", "bg-[#999999]", "bg-[#b3b3b3]",
  "bg-[#bfbfbf]", "bg-[#d4d4d4]", "bg-[#e9e9e9]", "bg-[#ffffff]", "bg-[#3b2f8f]", "bg-[#3f9fd5]", "bg-[#4fa463]",
  "bg-[#f5df3b]", "bg-[#bb3a22]", "bg-[#c02a85]", "bg-[#954c8b]", "bg-[#db8118]", "bg-[#efb8bb]", "bg-[#7b6f6b]",
  "bg-[#d9d5f2]", "bg-[#aea3da]", "bg-[#8193cf]", "bg-[#8572be]", "bg-[#8e88b0]", "bg-[#555c82]", "bg-[#544f68]",
  "bg-[#707b95]", "bg-[#3789c4]", "bg-[#b6d6ec]", "bg-[#b6c5d0]", "bg-[#929da3]",
];

function Palette() {
  return (
    <div className="ml-[2px] flex w-[23px] shrink-0 flex-col items-center bg-[#f2f2f2]">
      <div className="mt-[3px] h-[4px] w-[20px] border-y border-dotted border-[#bbbbbb]" />
      <svg width="7" height="10" viewBox="0 0 7 10" className="mt-[7px]"><path d="M0 0l7 5-7 5z" fill="#111" /></svg>
      <svg width="16" height="16" viewBox="0 0 17 17" className="mt-[9px]">
        <path d="M10 5L2 13v3h3l8-8z" fill="#ddd" stroke="#c4c4c4" strokeWidth="1.200" />
        <circle cx="13.500" cy="3.500" r="3" fill="#c4c4c4" />
      </svg>
      <svg width="14" height="9" viewBox="0 0 14 9" className="mt-[11px]"><path d="M1 8l6-6 6 6" fill="none" stroke="#d0d0d0" strokeWidth="2" /></svg>
      <div className="mt-[8px] w-full">
        <XCell className="block h-[20px] w-full border border-[#666]" />
        {swatches.map((c) => (
          <div key={c} className={`h-[21px] border-x border-b border-[#777] ${c}`} />
        ))}
        <div className="h-[9px] bg-[#6b7176]" />
      </div>
      <svg width="14" height="9" viewBox="0 0 14 9" className="mt-[6px]"><path d="M1 1l6 6 6-6" fill="none" stroke="#b0b8c0" strokeWidth="2" /></svg>
      <svg width="14" height="11" viewBox="0 0 14 11" className="mt-[12px]"><path d="M1 1l5 4.500-5 4.500M7 1l5 4.500-5 4.500" fill="none" stroke="#c4c8cc" strokeWidth="1.600" /></svg>
    </div>
  );
}

function StatusBar() {
  return (
    <div className="flex h-[42px] shrink-0 items-center border-y border-[#d0d0d0] border-b-[#333333] bg-[#f2f2f2]">
      <span className="ml-[5px] w-[98px] whitespace-nowrap">( 7.687 , 9.731 &nbsp;)</span>
      <svg width="6" height="10" viewBox="0 0 6 10" className="ml-[21px]"><path d="M0 0l6 5-6 5z" fill="#111" /></svg>
      <svg width="20" height="20" viewBox="0 0 20 20" className="ml-[1225px]">
        <rect x="0" y="0" width="20" height="15" fill="#333" />
        <rect x="1.500" y="1.500" width="17" height="6" fill="#e8192c" />
        <rect x="1.500" y="7.500" width="17" height="6" fill="#31a4e8" />
        <circle cx="10" cy="7.500" r="2.500" fill="#fff" stroke="#333" />
        <path d="M8 15h4v3H8zM5 18h10v2H5z" fill="#333" />
      </svg>
      <svg width="22" height="24" viewBox="0 0 22 24" className="ml-[17px]">
        <path d="M1 12l9-9 9 9-9 9z" fill="#fff" stroke="#222" strokeWidth="1.800" />
        <path d="M6 12h9l-4.500 4z" fill="#e8192c" />
        <path d="M21 17v7h-6z" fill="#e8192c" />
      </svg>
      <div className="ml-[2px] h-[26px] w-[26px] border border-[#888]">
        <svg width="24" height="24" viewBox="0 0 24 24" className="block">
          <rect width="24" height="24" fill="#fff" />
          <path d="M0 0l24 24M24 0L0 24" stroke="#222" strokeWidth="1.600" />
        </svg>
      </div>
      <span className="ml-[4px] w-[40px]">None</span>
      <Sep className="ml-[157px] h-[24px]" />
      <svg width="12" height="24" viewBox="0 0 12 24" className="ml-[15px]" fill="none" stroke="#333">
        <path d="M6 1L1.500 10l1.500 5h6l1.500-5zM6 1v8M3.500 16h5v6h-5z" />
      </svg>
      <div className="ml-[5px] h-[26px] w-[26px] border border-[#888] bg-[#1c1c1c]" />
      <span className="ml-[3px] whitespace-pre">C:0 M:0 Y:0 K:100  0.500 pt</span>
    </div>
  );
}

export default function App() {
  return (
    <div className="flex h-[1031px] w-[1918px] flex-col overflow-hidden bg-[#f2f2f2] font-['Noto_Sans','Liberation_Sans',sans-serif] text-[12.5px] leading-none text-[#1a1a1a]">
      <TitleBar />
      <MenuBar />
      <ToolbarOne />
      <ToolbarTwo />
      <div className="flex h-[850px] shrink-0">
        <Toolbox />
        <div className="flex w-[1519px] shrink-0 flex-col">
          <Tabs />
          <TopRuler />
          <div className="flex min-h-0 flex-1">
            <LeftRuler />
            <div className="flex min-w-0 flex-1 flex-col">
              <Canvas />
              <PageBar />
            </div>
          </div>
          <ColorBar />
        </div>
        <div className="w-[3px] shrink-0 bg-white" />
        <div className="flex w-[337px] shrink-0 flex-col">
          <div className="flex h-[24px] shrink-0 items-center bg-[#e9e9e9] pl-[2px]">
            <span className="mt-[2px]">Step and Repeat</span>
            <svg width="14" height="12" viewBox="0 0 14 12" className="ml-auto"><path d="M0 0l7 6-7 6zM7 0l7 6-7 6z" fill="#c4c4c4" /></svg>
            <svg width="12" height="12" viewBox="0 0 12 12" className="ml-[9px] mr-[5px]"><path d="M1 1l10 10M11 1L1 11" stroke="#c4c4c4" strokeWidth="2.200" /></svg>
          </div>
          <div className="flex min-h-0 flex-1">
            <StepAndRepeat />
            <DockerTabs />
          </div>
        </div>
        <Palette />
      </div>
      <StatusBar />
    </div>
  );
}
